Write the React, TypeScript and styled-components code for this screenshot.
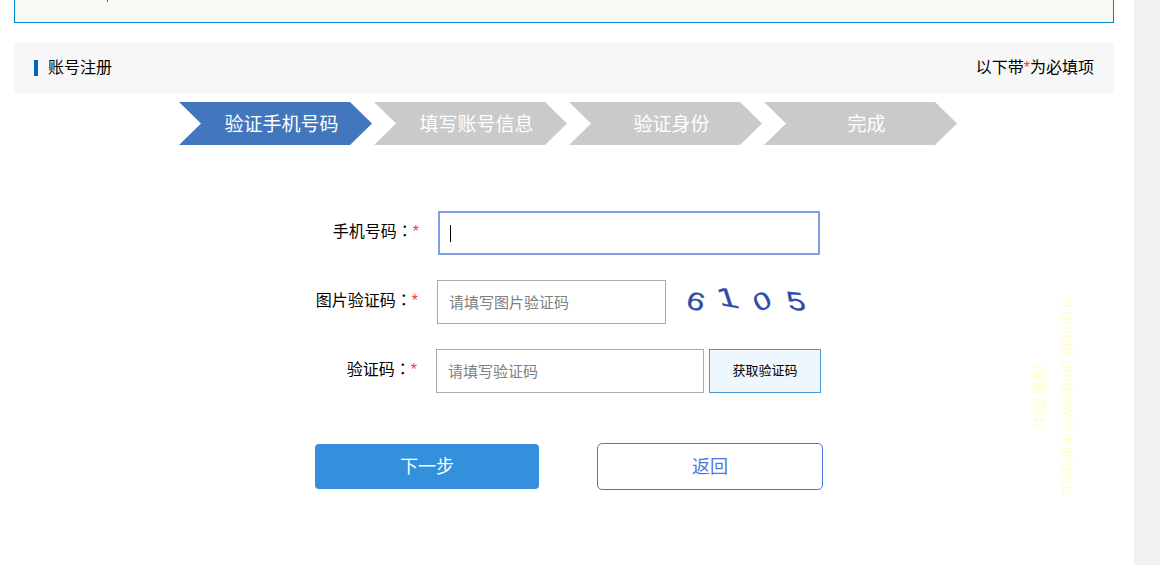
import React from 'react'
import styled, { createGlobalStyle } from 'styled-components'

const GlobalStyle = createGlobalStyle`
  html, body {
    margin: 0;
    padding: 0;
    height: 100%;
    overflow: hidden;
    background: #fff;
    font-family: "Liberation Sans", "Noto Sans CJK SC", sans-serif;
  }
  * {
    box-sizing: border-box;
  }
`

const Page = styled.div`
  position: relative;
  display: flex;
  width: 1160px;
  height: 565px;
  overflow: hidden;
`

const Main = styled.main`
  flex: 1;
  padding: 0 20px 0 14px;
`

const ScrollTrack = styled.div`
  width: 26px;
  background: #f1f1f1;
`

const Notice = styled.div`
  height: 23px;
  padding-left: 92px;
  background: #f7f9f5;
  border: 1px solid #0088cc;
  border-top: 0;
`

const NoticeTick = styled.div`
  width: 1px;
  height: 2px;
  background: #0088cc;
`

const HeadBar = styled.header`
  display: flex;
  align-items: center;
  justify-content: space-between;
  height: 50px;
  margin-top: 20px;
  padding: 0 20px;
  background: #f7f7f7;
  font-size: 16px;
  color: #000;
`

const HeadTitle = styled.h2`
  margin: 0;
  padding-left: 10px;
  border-left: 4px solid #0066bb;
  font-size: 16px;
  font-weight: normal;
  line-height: 16px;
`

const HeadNote = styled.span`
  line-height: 16px;
  margin-top: -1px;
`

const Star = styled.span`
  color: #f33;
`

const StepTrack = styled.ol`
  display: flex;
  gap: 2px;
  margin: 9px 0 0;
  padding: 0 0 0 165px;
  list-style: none;
`

const Step = styled.li<{ $active?: boolean }>`
  width: 193px;
  height: 43px;
  padding-left: 12px;
  background: ${(p) => (p.$active ? '#4277bd' : '#cacaca')};
  clip-path: polygon(0 0, 171px 0, 100% 50%, 171px 100%, 0 100%, 22px 50%);
  color: #fff;
  font-size: 19px;
  line-height: 46px;
  text-align: center;
`

const Form = styled.form`
  margin: 66px 0 0;
  padding-left: 205px;
`

const Row = styled.div<{ $shift?: number }>`
  display: flex;
  gap: 19px;
  height: 44px;
  margin-bottom: 25px;
  margin-left: ${(p) => -(p.$shift || 0)}px;
`

const Label = styled.label`
  width: 200px;
  font-size: 16px;
  line-height: 38px;
  color: #000;
  text-align: right;
  white-space: nowrap;
`

const Colon = styled.span`
  font-family: "Noto Sans CJK TC", sans-serif;
`

const FocusedField = styled.div`
  display: flex;
  align-items: center;
  width: 382px;
  height: 44px;
  padding-left: 10px;
  border: 2px solid #7f9fe8;
  background: #fff;
`

const Caret = styled.span`
  width: 1px;
  height: 17px;
  background: #000;
`

const TextInput = styled.input<{ $width: number }>`
  width: ${(p) => p.$width}px;
  height: 44px;
  padding: 0 11px;
  border: 1px solid #aaa;
  outline: 0;
  background: #fff;
  font-family: inherit;
  font-size: 15px;
  color: #333;

  &::placeholder {
    color: #808080;
    opacity: 1;
  }
`

const Captcha = styled.svg`
  display: block;
  width: 125px;
  height: 44px;
  overflow: visible;
`

const CaptchaDigit = styled.text`
  font-family: "Liberation Sans", sans-serif;
  font-size: 25px;
  text-anchor: middle;
  fill: #2c4ca8;
  stroke: #2c4ca8;
  stroke-width: 0.3px;
`

const SmsRow = styled(Row)`
  gap: 0;
`

const SmsLabel = styled(Label)`
  margin-right: 19px;
`

const SmsButton = styled.button`
  width: 112px;
  height: 44px;
  margin-left: 5px;
  padding: 0 0 3px;
  border: 1px solid #4a9ad8;
  background: #eef7fe;
  font-family: inherit;
  font-size: 13px;
  color: #000;
`

const Actions = styled.div`
  display: flex;
  align-items: center;
  gap: 58px;
  margin: 50px 0 0 96px;
`

const NextButton = styled.button`
  width: 224px;
  height: 45px;
  padding: 0 0 3px;
  border: 0;
  border-radius: 4px;
  background: #348fdc;
  font-family: inherit;
  font-size: 18px;
  color: #fff;
`

const BackButton = styled.button`
  width: 226px;
  height: 47px;
  padding: 0 0 3px;
  border: 1px solid #4a78d8;
  border-radius: 5px;
  background: #fff;
  font-family: inherit;
  font-size: 18px;
  color: #4a78d8;
`

const Watermark = styled.div`
  position: absolute;
  left: 952px;
  top: 370px;
  width: 204px;
  height: 52px;
  transform: rotate(-90deg);
  font-size: 16px;
  line-height: 26px;
  color: #ffffcc;
  text-align: center;
  white-space: nowrap;
  pointer-events: none;
`

const steps = ['验证手机号码', '填写账号信息', '验证身份', '完成']

const digits = [
  { text: '6', x: 11, y: 21, rotate: 14, skew: 0, sx: 1.3 },
  { text: '1', x: 42, y: 17, rotate: 10, skew: 28, sx: 1.5 },
  { text: '0', x: 77, y: 21, rotate: -28, skew: 0, sx: 1.2 },
  { text: '5', x: 111, y: 21, rotate: 6, skew: 20, sx: 1.3 },
]

export default function App() {
  return (
    <Page>
      <GlobalStyle />
      <Main>
        <Notice>
          <NoticeTick />
        </Notice>
        <HeadBar>
          <HeadTitle>账号注册</HeadTitle>
          <HeadNote>
            以下带<Star>*</Star>为必填项
          </HeadNote>
        </HeadBar>
        <StepTrack>
          {steps.map((step, i) => (
            <Step key={step} $active={i === 0}>
              {step}
            </Step>
          ))}
        </StepTrack>
        <Form>
          <Row>
            <Label>
              手机号码<Colon>：</Colon>
              <Star>*</Star>
            </Label>
            <FocusedField>
              <Caret />
            </FocusedField>
          </Row>
          <Row $shift={1}>
            <Label>
              图片验证码<Colon>：</Colon>
              <Star>*</Star>
            </Label>
            <TextInput $width={229} placeholder="请填写图片验证码" />
            <Captcha viewBox="0 0 125 44">
              {digits.map((d) => (
                <CaptchaDigit
                  key={d.text}
                  dy="0.36em"
                  transform={`translate(${d.x} ${d.y}) rotate(${d.rotate}) skewX(${d.skew}) scale(${d.sx} 1)`}
                >
                  {d.text}
                </CaptchaDigit>
              ))}
            </Captcha>
          </Row>
          <SmsRow $shift={2}>
            <SmsLabel>
              验证码<Colon>：</Colon>
              <Star>*</Star>
            </SmsLabel>
            <TextInput $width={268} placeholder="请填写验证码" />
            <SmsButton type="button">获取验证码</SmsButton>
          </SmsRow>
          <Actions>
            <NextButton type="button">下一步</NextButton>
            <BackButton type="button">返回</BackButton>
          </Actions>
        </Form>
      </Main>
      <ScrollTrack />
      <Watermark>
        中梁维权
        <br />
        zhongliangweiquan.github.io
      </Watermark>
    </Page>
  )
}
